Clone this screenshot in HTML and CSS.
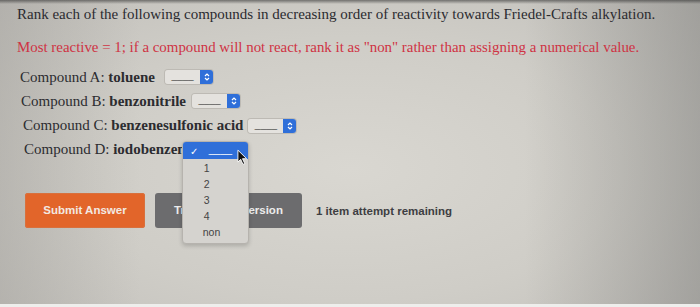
FILE: index.html
```html
<!DOCTYPE html>
<html>
<head>
<meta charset="utf-8">
<link rel="stylesheet" href="styles.css">
</head>
<body>
<div class="screen">
  <div class="page">
    <p class="question">Rank each of the following compounds in decreasing order of reactivity towards Friedel-Crafts alkylation.</p>
    <p class="note">Most reactive = 1; if a compound will not react, rank it as "non" rather than assigning a numerical value.</p>
    <div class="rows">
      <div class="row row-a">Compound A: <b>toluene</b>
        <span class="select"><span class="field">____</span><span class="stepper"><svg viewBox="0 0 8 12" width="8" height="12"><path d="M2 5 L4 3 L6 5 M2 7 L4 9 L6 7" fill="none" stroke="#fff" stroke-width="1.2"/></svg></span></span>
      </div>
      <div class="row row-b">Compound B: <b>benzonitrile</b>
        <span class="select"><span class="field">____</span><span class="stepper"><svg viewBox="0 0 8 12" width="8" height="12"><path d="M2 5 L4 3 L6 5 M2 7 L4 9 L6 7" fill="none" stroke="#fff" stroke-width="1.2"/></svg></span></span>
      </div>
      <div class="row row-c">Compound C: <b>benzenesulfonic acid</b>
        <span class="select"><span class="field">____</span><span class="stepper"><svg viewBox="0 0 8 12" width="8" height="12"><path d="M2 5 L4 3 L6 5 M2 7 L4 9 L6 7" fill="none" stroke="#fff" stroke-width="1.2"/></svg></span></span>
      </div>
      <div class="row row-d">Compound D: <b>iodobenzen</b>
        <span class="menu-anchor">
          <span class="menu">
            <span class="opt opt-selected"><span class="check">✓</span>____</span>
            <span class="opt">1</span>
            <span class="opt">2</span>
            <span class="opt">3</span>
            <span class="opt">4</span>
            <span class="opt">non</span>
          </span>
          <svg class="cursor" viewBox="0 0 12 18" width="11" height="17"><path d="M1 1 L1 14 L4 11 L6.5 16.5 L8.5 15.6 L6 10.3 L10.5 10.3 Z" fill="#111" stroke="#fff" stroke-width="1"/></svg>
        </span>
      </div>
    </div>
    <div class="actions">
      <button class="btn btn-submit">Submit Answer</button>
      <button class="btn btn-try">Try Another Version</button>
      <span class="attempts">1 item attempt remaining</span>
    </div>
  </div>
  <div class="bottom-strip"></div>
</div>
</body>
</html>
```
FILE: styles.css
```css
html, body {
  margin: 0;
  padding: 0;
}
body {
  width: 700px;
  height: 307px;
  overflow: hidden;
  background: #cfccc6;
}
.screen {
  width: 700px;
  height: 307px;
  display: flex;
  flex-direction: column;
  background:
    linear-gradient(to bottom, rgba(40,40,40,0.55) 0px, rgba(40,40,40,0) 4px),
    linear-gradient(to right, rgba(150,148,144,0.35) 0%, rgba(150,148,144,0) 20%, rgba(150,148,144,0) 75%, rgba(120,120,118,0.45) 100%),
    radial-gradient(ellipse at 50% 55%, #d9d7d1 0%, #cfcdc7 55%, #c2c0bb 100%);
}
.page {
  flex: 1;
  padding: 5px 0 0 17px;
  font-family: "Liberation Serif", "Times New Roman", serif;
  color: #2a2a2e;
}
.question {
  margin: 0;
  font-size: 15px;
  line-height: 18px;
  color: #2b2b30;
}
.note {
  margin: 15px 0 0 0;
  font-size: 14.9px;
  line-height: 18px;
  color: #cf3344;
}
.rows {
  margin-top: 12px;
  display: flex;
  flex-direction: column;
  gap: 6.3px;
}
.row {
  display: flex;
  align-items: center;
  height: 18px;
  font-size: 15px;
  color: #2c2c30;
  white-space: pre;
}
.row b {
  font-weight: bold;
}
.row-a { padding-left: 3px; }
.row-b { padding-left: 4px; }
.row-c { padding-left: 6px; }
.row-d { padding-left: 7px; }
.select {
  display: inline-flex;
  align-items: stretch;
  height: 14px;
  margin-left: 10px;
  border-radius: 3px;
  overflow: hidden;
  box-shadow: 0 0 0 1px #bdbab4;
}
.row-b .select { margin-left: 6px; }
.row-c .select { margin-left: 5px; }
.field {
  width: 35px;
  background: #e4e2de;
  font-family: "Liberation Sans", Arial, sans-serif;
  font-size: 10px;
  line-height: 12px;
  color: #555;
  text-align: center;
}
.stepper {
  width: 13px;
  background: #2f6fd9;
  display: flex;
  align-items: center;
  justify-content: center;
}
.menu-anchor {
  position: relative;
  width: 60px;
  height: 18px;
}
.menu {
  position: absolute;
  left: -4px;
  top: 0;
  width: 65px;
  padding: 0 0 3px 0;
  background: #d5d3cf;
  border: 1px solid #b6b3ae;
  border-radius: 4px;
  box-shadow: 0 2px 4px rgba(0,0,0,0.18);
  display: flex;
  flex-direction: column;
  font-family: "Liberation Sans", Arial, sans-serif;
  font-size: 10.5px;
  color: #444;
  z-index: 2;
}
.opt {
  height: 16px;
  line-height: 16px;
  padding-left: 21px;
}
.opt-selected + .opt {
  margin-top: 1px;
}
.opt:last-child {
  padding-left: 20px;
}
.opt-selected {
  position: relative;
  height: 17px;
  line-height: 15px;
  background: #2f6fd9;
  color: #fff;
  padding-left: 26px;
  border-radius: 3px 3px 0 0;
}
.check {
  position: absolute;
  left: 7px;
  top: 2px;
  font-size: 10px;
}
.cursor {
  position: absolute;
  left: 51px;
  top: 8px;
  z-index: 3;
}
.actions {
  margin-top: 34px;
  margin-left: 8px;
  display: flex;
  align-items: center;
  font-family: "Liberation Sans", Arial, sans-serif;
}
.btn {
  height: 35px;
  border: none;
  border-radius: 3px;
  font-family: "Liberation Sans", Arial, sans-serif;
  font-weight: bold;
  font-size: 11.5px;
  color: #f2e9e2;
  padding: 0;
}
.btn-submit {
  width: 120px;
  background: #e2652a;
  box-shadow: 0 0 0 1px #d8703d inset;
}
.btn-try {
  width: 147px;
  margin-left: 10px;
  background: #6c6c6e;
  color: #ececec;
}
.attempts {
  margin-left: 14px;
  margin-top: 1px;
  font-size: 11.5px;
  font-weight: bold;
  color: #3e3e42;
}
.bottom-strip {
  height: 3px;
  background: #eeeeec;
}
```
